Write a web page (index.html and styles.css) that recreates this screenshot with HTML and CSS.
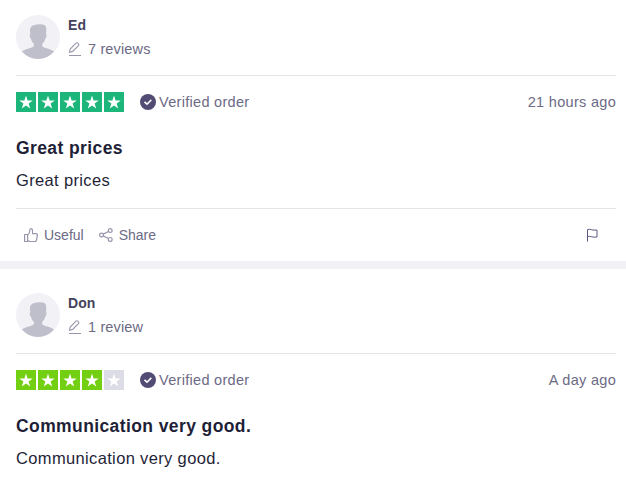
FILE: index.html
```html
<!DOCTYPE html>
<html lang="en">
<head>
    <meta charset="UTF-8">
    <meta name="viewport" content="width=device-width, initial-scale=1.0">
    <title>Reviews</title>
    <link rel="stylesheet" href="styles.css">
</head>
<body>
    <!-- Shared icons -->
    <svg class="sprite" aria-hidden="true">
        <symbol id="avatar" viewBox="0 0 44 44">
            <circle cx="22" cy="22" r="22" fill="#f1f1f6"/>
            <path fill="#bfbecb" d="M14.500 19C13.300 15 14 11.500 17.500 10.300c3.500-1.300 8-1.600 11-.3 2.200 1.700 2 5.500 1.500 9 1 .2.600 4.200-.8 4.700-.5 2.200-1.600 3.900-3 5.100V31c1.300 2.500 8.300 2.500 11.800 5.500A22 22 0 0 1 22 44 22 22 0 0 1 6 36.500c3.500-3 10.500-3 11.800-5.500v-2.200c-1.400-1.200-2.300-2.900-2.800-5.100-1.300-.5-1.700-4.300-.5-4.700z"/>
        </symbol>
        <symbol id="pen" viewBox="0 0 14 14">
            <path fill="none" stroke="currentColor" stroke-width="1.100" d="M1.500 10.200l.7-3.200L8 1.200q.9-.9 1.800 0l.6.600q.9.900 0 1.800L4.700 9.400zM1 13.500h12"/>
        </symbol>
        <symbol id="star" viewBox="0 0 20 20">
            <path fill="#fff" d="M10 3.500l1.600 4.900h5.200l-4.200 3.100 1.600 4.900-4.200-3-4.200 3 1.600-4.900-4.200-3.100h5.200z"/>
        </symbol>
        <symbol id="check" viewBox="0 0 16 16">
            <circle cx="8" cy="8" r="8" fill="#524c74"/>
            <path fill="none" stroke="#fff" stroke-width="1.600" d="M4.500 7.800l2.500 2.400 4.300-4.300"/>
        </symbol>
        <symbol id="thumb" viewBox="0 0 14 14">
            <path fill="none" stroke="currentColor" stroke-width="1.200" stroke-linejoin="round" d="M.6 6.500h3v7h-3zM3.600 7c1.800-1.300 2.300-2.500 2.300-5.200 0-1.700 2.600-1.500 2.600.8v3h3.700c.9 0 1.300.7 1.200 1.500l-.9 5c-.2.900-.7 1.400-1.500 1.400H6L3.600 12.500"/>
        </symbol>
        <symbol id="share" viewBox="0 0 14 14">
            <g fill="none" stroke="currentColor" stroke-width="1.200">
                <circle cx="2.500" cy="7" r="1.900"/>
                <circle cx="11.200" cy="2.600" r="1.900"/>
                <circle cx="11.200" cy="11.400" r="1.900"/>
                <path d="M4.200 6.100l5.300-2.600M4.200 7.900l5.300 2.600"/>
            </g>
        </symbol>
        <symbol id="flag" viewBox="0 0 12 14">
            <path fill="none" stroke="currentColor" d="M1.500 13.500V1.500c3-.8 5 1.300 9.500.5v7c-4.500.8-6.500-1.300-9.500-.5"/>
        </symbol>
    </svg>

    <article class="review">
        <header class="consumer">
            <svg class="avatar"><use href="#avatar"/></svg>
            <div>
                <div class="name">Ed</div>
                <div class="count"><svg class="pen"><use href="#pen"/></svg><span>7 reviews</span></div>
            </div>
        </header>
        <div class="rating">
            <div class="stars great">
                <svg><use href="#star"/></svg>
                <svg><use href="#star"/></svg>
                <svg><use href="#star"/></svg>
                <svg><use href="#star"/></svg>
                <svg><use href="#star"/></svg>
            </div>
            <svg class="check"><use href="#check"/></svg>
            <span class="verified">Verified order</span>
            <span class="date">21 hours ago</span>
        </div>
        <h2>Great prices</h2>
        <p>Great prices</p>
        <footer class="actions">
            <a class="useful"><svg><use href="#thumb"/></svg>Useful</a>
            <a class="share"><svg><use href="#share"/></svg>Share</a>
            <svg class="flag"><use href="#flag"/></svg>
        </footer>
    </article>

    <article class="review">
        <header class="consumer">
            <svg class="avatar"><use href="#avatar"/></svg>
            <div>
                <div class="name">Don</div>
                <div class="count"><svg class="pen"><use href="#pen"/></svg><span>1 review</span></div>
            </div>
        </header>
        <div class="rating">
            <div class="stars good">
                <svg><use href="#star"/></svg>
                <svg><use href="#star"/></svg>
                <svg><use href="#star"/></svg>
                <svg><use href="#star"/></svg>
                <svg class="empty"><use href="#star"/></svg>
            </div>
            <svg class="check"><use href="#check"/></svg>
            <span class="verified">Verified order</span>
            <span class="date">A day ago</span>
        </div>
        <h2>Communication very good.</h2>
        <p>Communication very good.</p>
    </article>
</body>
</html>
```
FILE: styles.css
```css
body {
    margin: 0;
    background-color: #fff;
    color: #1f1f38;
    font-family: "Liberation Sans", Arial, sans-serif;
    font-size: 14.5px;
    overflow: hidden;
}
svg {
    display: block;
    flex: none;
}
.sprite {
    display: none;
}
.review {
    padding: 15px 10px 0 16px;
}
.review + .review {
    border-top: 8px solid #f1f1f6;
    padding-top: 24px;
}
.consumer {
    display: flex;
    gap: 8px;
    height: 44px;
    padding-bottom: 16px;
    border-bottom: 1px solid #e5e5e8;
}
.avatar {
    width: 44px;
    height: 44px;
}
.name {
    color: #45435c;
    font-size: 14px;
    font-weight: bold;
    line-height: 20px;
    letter-spacing: 0.1px;
}
.count {
    display: flex;
    align-items: center;
    margin-top: 4px;
    line-height: 20px;
    color: #6c6a85;
    letter-spacing: 0.15px;
}
.pen {
    width: 14px;
    height: 14px;
    margin-right: 6px;
    color: #9896aa;
}
.rating {
    display: flex;
    align-items: center;
    height: 20px;
    margin-top: 16px;
    color: #6c6a85;
}
.stars {
    display: flex;
    gap: 2px;
    margin-right: 16px;
}
.stars svg {
    width: 20px;
    height: 20px;
}
.great svg {
    background-color: #1cb57a;
}
.good svg {
    background-color: #73cf11;
}
.good .empty {
    background-color: #dcdce6;
}
.check {
    width: 16px;
    height: 16px;
    margin-right: 3px;
}
.verified {
    letter-spacing: 0.3px;
}
.date {
    margin-left: auto;
    letter-spacing: 0.3px;
}
h2 {
    margin: 24px 0 0;
    font-size: 17.5px;
    line-height: 24px;
    letter-spacing: 0.4px;
}
p {
    margin: 8px 0 0;
    font-size: 16.5px;
    line-height: 24px;
    letter-spacing: 0.35px;
}
.actions {
    display: flex;
    align-items: center;
    height: 52px;
    margin-top: 16px;
    padding: 0 18px 0 8px;
    border-top: 1px solid #e5e5e8;
    color: #6c6a85;
    font-size: 14px;
}
.actions a {
    display: flex;
    align-items: center;
    margin-right: 15px;
}
.actions a svg {
    width: 14px;
    height: 14px;
    margin-right: 6px;
    color: #9896aa;
}
.flag {
    width: 12px;
    height: 14px;
    margin-left: auto;
    color: #5d5880;
}
```
